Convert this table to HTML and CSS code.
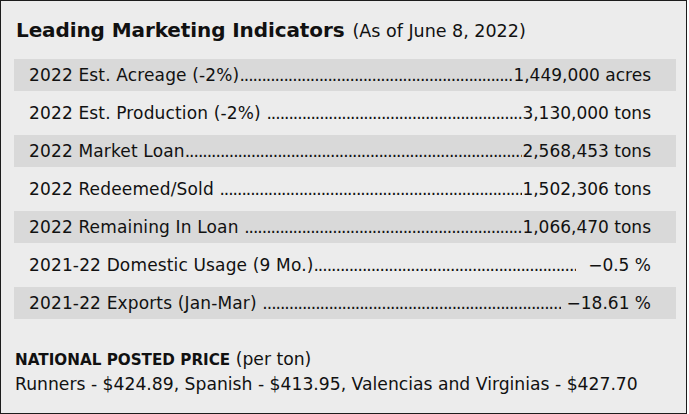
FILE: index.html
```html
<!DOCTYPE html>
<html>
<head>
<meta charset="utf-8">
<link rel="stylesheet" href="styles.css">
</head>
<body>
<div class="card">
  <div class="title"><span class="title-main">Leading Marketing Indicators</span><span class="title-sub">(As of June 8, 2022)</span></div>
  <div class="rows">
    <div class="row shaded"><span class="label">2022 Est. Acreage (-2%)</span><span class="leader"></span><span class="value">1,449,000 acres</span></div>
    <div class="row"><span class="label">2022 Est. Production (-2%)&nbsp;</span><span class="leader"></span><span class="value">3,130,000 tons</span></div>
    <div class="row shaded"><span class="label">2022 Market Loan</span><span class="leader"></span><span class="value">2,568,453 tons</span></div>
    <div class="row"><span class="label">2022 Redeemed/Sold&nbsp;</span><span class="leader"></span><span class="value">1,502,306 tons</span></div>
    <div class="row shaded"><span class="label">2022 Remaining In Loan&nbsp;</span><span class="leader"></span><span class="value">1,066,470 tons</span></div>
    <div class="row"><span class="label">2021-22 Domestic Usage (9 Mo.)</span><span class="leader"></span><span class="value gap-wide">&minus;0.5 %</span></div>
    <div class="row shaded"><span class="label">2021-22 Exports (Jan-Mar)&nbsp;</span><span class="leader"></span><span class="value gap">&minus;18.61 %</span></div>
  </div>
  <div class="footer">
    <div class="footer-head"><span class="caps">NATIONAL POSTED PRICE</span> (per ton)</div>
    <div class="footer-text">Runners - $424.89, Spanish - $413.95, Valencias and Virginias - $427.70</div>
  </div>
</div>
</body>
</html>
```

FILE: styles.css
```css
html, body {
  margin: 0;
  padding: 0;
  background: #ffffff;
}

.card {
  box-sizing: border-box;
  width: 687px;
  height: 414px;
  border: 1px solid #1c1c1c;
  background: #ececec;
  padding: 14px 10px 0 13px;
  display: flex;
  flex-direction: column;
  font-family: "DejaVu Sans", sans-serif;
  color: #111111;
}

.title {
  display: flex;
  align-items: baseline;
  gap: 8px;
  padding-left: 2px;
  height: 30px;
  line-height: 30px;
}

.title-main {
  font-size: 20px;
  font-weight: bold;
  letter-spacing: -0.1px;
}

.title-sub {
  font-size: 17.5px;
}

.rows {
  margin-top: 14px;
  display: flex;
  flex-direction: column;
  gap: 6px;
}

.row {
  display: flex;
  align-items: center;
  height: 32px;
  padding: 0 25px 0 15px;
  font-size: 17px;
  white-space: nowrap;
}

.row.shaded {
  background: #d9d9d9;
}

.label {
  flex: none;
  letter-spacing: 0.15px;
}

.leader {
  flex: 1;
  overflow: hidden;
  height: 20px;
  line-height: 20px;
  position: relative;
}

.leader::before {
  content: "................................................................................................................................................................................................";
  letter-spacing: -1px;
  position: absolute;
  left: 0;
  top: 0;
}

.value {
  flex: none;
}

.value.gap {
  padding-left: 6px;
}

.value.gap-wide {
  padding-left: 12px;
}

.footer {
  margin-top: 28px;
  padding-left: 1px;
  font-size: 17.2px;
  line-height: 24px;
}

.caps {
  font-weight: bold;
  font-size: 15.2px;
}
```
